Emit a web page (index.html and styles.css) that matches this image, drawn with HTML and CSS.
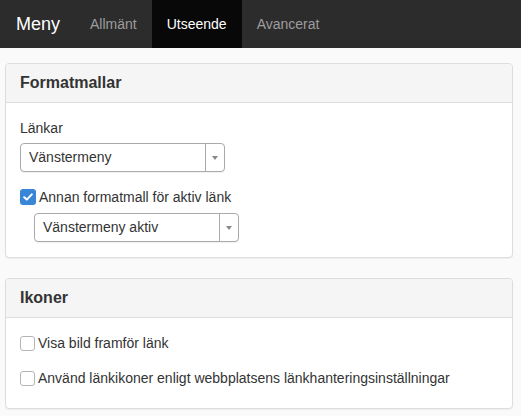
FILE: index.html
```html
<!DOCTYPE html>
<html lang="sv">
<head>
    <meta charset="UTF-8">
    <meta name="viewport" content="width=device-width, initial-scale=1.0">
    <title>Meny</title>
    <link rel="stylesheet" href="styles.css">
</head>
<body>
    <!-- Navigation -->
    <nav class="navbar">
        <span class="brand">Meny</span>
        <a href="#" class="tab">Allmänt</a>
        <a href="#" class="tab active">Utseende</a>
        <a href="#" class="tab">Avancerat</a>
    </nav>

    <div class="page">
        <!-- Formatmallar -->
        <section class="panel">
            <div class="panel-heading">Formatmallar</div>
            <div class="panel-body">
                <label class="field-label">Länkar</label>
                <div class="select">
                    <span class="select-value">Vänstermeny</span>
                    <span class="select-arrow"></span>
                </div>
                <label class="check">
                    <span class="box checked">
                        <svg width="10" height="8" viewBox="0 0 10 8"><path d="M1.2 4.2 L3.8 6.6 L8.8 1.4" fill="none" stroke="#fff" stroke-width="2" stroke-linecap="round" stroke-linejoin="round"/></svg>
                    </span>
                    Annan formatmall för aktiv länk
                </label>
                <div class="select indent">
                    <span class="select-value">Vänstermeny aktiv</span>
                    <span class="select-arrow"></span>
                </div>
            </div>
        </section>

        <!-- Ikoner -->
        <section class="panel">
            <div class="panel-heading">Ikoner</div>
            <div class="panel-body icons">
                <label class="check"><span class="box"></span>Visa bild framför länk</label>
                <label class="check"><span class="box"></span>Använd länkikoner enligt webbplatsens länkhanteringsinställningar</label>
            </div>
        </section>
    </div>
</body>
</html>
```

FILE: styles.css
```css
body {
    margin: 0;
    font-family: 'Liberation Sans', Arial, sans-serif;
    font-size: 14px;
    line-height: 20px;
    color: #333;
    background-color: #fafafa;
}

/* Barre de navigation */
.navbar {
    display: flex;
    height: 48px;
    background-color: #2c2c2c;
}

.brand {
    padding: 0 15px 0 16px;
    font-size: 18px;
    line-height: 48px;
    color: #fff;
}

.tab {
    padding: 0 15px;
    line-height: 48px;
    color: #9d9d9d;
    text-decoration: none;
}

.tab.active {
    color: #fff;
    background-color: #080808;
}

.page {
    padding: 15px 8px 0 5px;
}

/* Panneaux */
.panel {
    background-color: #fff;
    border: 1px solid #ddd;
    border-radius: 4px;
    box-shadow: 0 1px 1px rgba(0, 0, 0, 0.05);
    margin-bottom: 20px;
}

.panel-heading {
    padding: 9px 14px 10px;
    font-size: 16px;
    font-weight: bold;
    line-height: 19px;
    background-color: #f5f5f5;
    border-bottom: 1px solid #ddd;
    border-radius: 3px 3px 0 0;
}

.panel-body {
    padding: 15px 14px;
    display: flex;
    flex-direction: column;
    align-items: flex-start;
}

.field-label {
    margin-bottom: 5px;
}

/* Listes déroulantes */
.select {
    display: flex;
    width: 203px;
    height: 27px;
    border: 1px solid #aaa;
    border-radius: 4px;
    background-color: #fff;
    box-shadow: 0 1px 1px rgba(0, 0, 0, 0.06);
}

.select-value {
    flex: 1;
    padding-left: 8px;
    line-height: 27px;
}

.select-arrow {
    width: 18px;
    border-left: 1px solid #aaa;
    position: relative;
}

.select-arrow::after {
    content: '';
    position: absolute;
    top: 12px;
    left: 6px;
    border-left: 3px solid transparent;
    border-right: 3px solid transparent;
    border-top: 4px solid #888;
}

.select.indent {
    margin-left: 14px;
    margin-top: 6px;
}

/* Cases à cocher */
.check {
    display: flex;
    align-items: center;
    gap: 3px;
    margin-top: 15px;
}

.box {
    box-sizing: border-box;
    width: 15px;
    height: 15px;
    border: 1px solid #b5b5b5;
    border-radius: 3px;
    background-color: #fff;
    display: flex;
    align-items: center;
    justify-content: center;
}

.box.checked {
    width: 16px;
    height: 16px;
    border: none;
    background-color: #3a86d6;
}

.icons {
    padding-bottom: 20px;
}

.icons .check:first-child {
    margin-top: 0;
}
```
